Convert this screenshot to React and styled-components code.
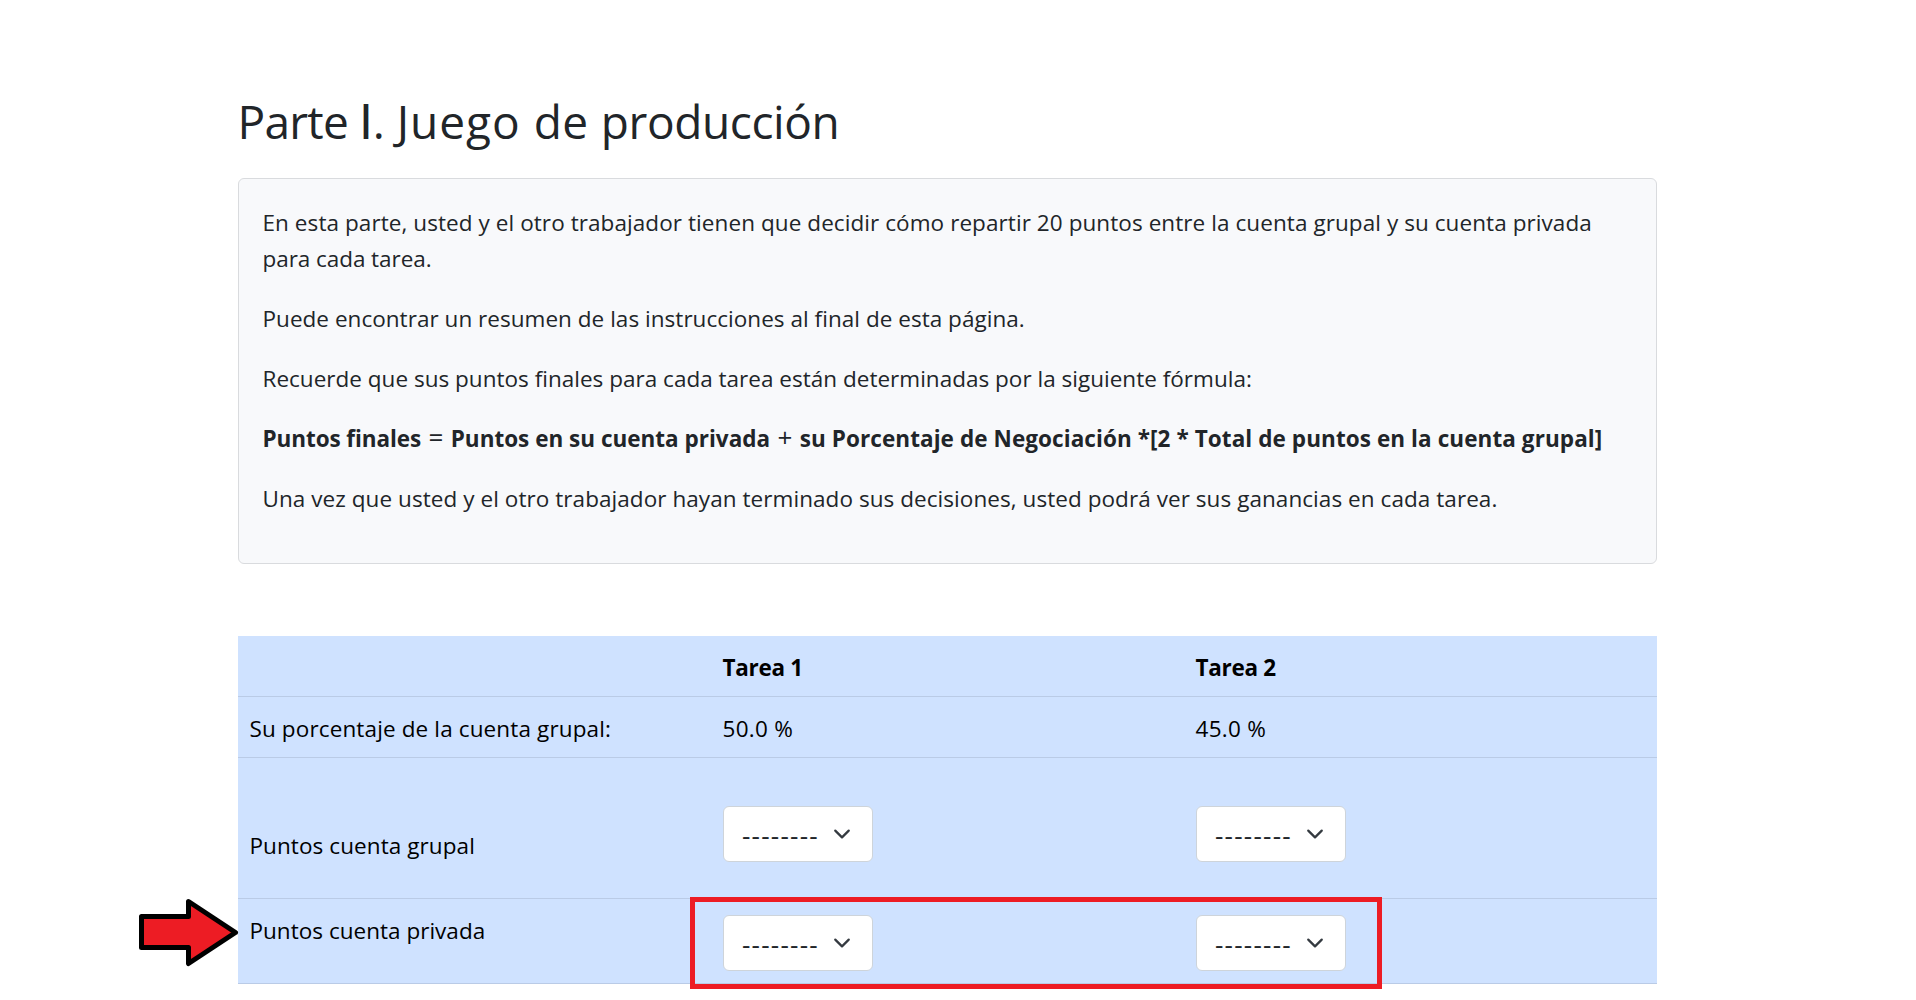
import React from "react";
import styled, { createGlobalStyle } from "styled-components";

const GlobalStyle = createGlobalStyle`
  * { box-sizing: border-box; }
  body {
    margin: 0;
    background: #fff;
    color: #212529;
    font-family: "Open Sans", "Noto Sans", sans-serif;
    font-size: 22.5px;
    line-height: 36px;
    overflow: hidden;
  }
`;

const Page = styled.main`
  position: relative;
  width: 1419px;
  height: 1000px;
  margin-left: 238px;
  padding-top: 92px;
`;

const Title = styled.h2`
  margin: 0 0 28px -0.5px;
  height: 58px;
  font-size: 46px;
  font-weight: 400;
  line-height: 58px;
  white-space: nowrap;
`;

const Word = styled.span`
  letter-spacing: ${(p) => p.$tracking || 0}px;
`;

const Numeral = styled.span`
  font-family: Lato, sans-serif;
  font-size: 48px;
  line-height: 0;
`;

const Card = styled.section`
  display: flex;
  flex-direction: column;
  gap: 24px;
  height: 386px;
  margin-bottom: 72px;
  padding: 26px 23.5px 0;
  background: #f8f9fb;
  border: 1px solid #d9dbde;
  border-radius: 6px;
`;

const Paragraph = styled.p`
  margin: 0;
  white-space: nowrap;
  letter-spacing: ${(p) => p.$tracking || 0}px;
`;

const Strong = styled.strong`
  font-weight: 700;
  letter-spacing: ${(p) => p.$tracking || 0}px;
`;

const Operator = styled.span`
  padding: 0 1.5px;
  font-size: 26px;
  line-height: 0;
`;

const Tail = styled.span`
  letter-spacing: -0.06px;
`;

const Table = styled.div`
  color: #000;
  background: #cfe2ff;
`;

const Row = styled.div`
  display: grid;
  grid-template-columns: repeat(3, 473px);
  height: ${(p) => p.$height}px;
  border-bottom: 1px solid #bacbe6;
`;

const Cell = styled.div`
  padding: ${(p) => p.$top || 14}px 11.5px 0;
  white-space: nowrap;
  font-weight: ${(p) => (p.$head ? 700 : 400)};
  letter-spacing: ${(p) => p.$tracking || 0}px;
`;

const SelectBox = styled.button`
  display: flex;
  align-items: center;
  justify-content: space-between;
  width: 150px;
  height: 56px;
  margin-left: 0.5px;
  padding: 0 18px;
  border: 1px solid #ced4da;
  border-radius: 6px;
  background: #fff;
  color: #212529;
  font-family: inherit;
  font-size: 26px;
  line-height: 36px;
`;

const Dashes = styled.span`
  padding-top: 2px;
  letter-spacing: 1.25px;
`;

const Chevron = styled.svg`
  display: block;
  width: 24px;
  height: 18px;
`;

const Highlight = styled.div`
  position: absolute;
  left: 452px;
  top: 897px;
  width: 692px;
  height: 92px;
  border: 5px solid #ed1c24;
`;

const Arrow = styled.svg`
  position: absolute;
  left: -100px;
  top: 896px;
  width: 102px;
  height: 74px;
`;

function Select() {
  return (
    <SelectBox type="button">
      <Dashes>--------</Dashes>
      <Chevron viewBox="0 0 16 16">
        <path d="m2 5 6 6 6-6" fill="none" stroke="#343a40" strokeWidth="2" strokeLinecap="round" strokeLinejoin="round" />
      </Chevron>
    </SelectBox>
  );
}

export default function App() {
  return (
    <>
      <GlobalStyle />
      <Page>
        <Title>
          <Word $tracking={-0.75}>Parte </Word>
          <Numeral>I</Numeral>
          <Word>. </Word>
          <Word $tracking={1}>Juego </Word>
          <Word $tracking={0.4}>de </Word>
          <Word $tracking={-0.4}>producción</Word>
        </Title>
        <Card>
          <Paragraph $tracking={0.075}>
            En esta parte, usted y el otro trabajador tienen que decidir cómo repartir 20 puntos entre la cuenta grupal y su cuenta privada
            <br />
            <Tail>para cada tarea.</Tail>
          </Paragraph>
          <Paragraph $tracking={0.033}>
            Puede encontrar un resumen de las instrucciones al final de esta página.
          </Paragraph>
          <Paragraph $tracking={0.015}>
            Recuerde que sus puntos finales para cada tarea están determinadas por la siguiente fórmula:
          </Paragraph>
          <Paragraph>
            <Strong $tracking={-0.08}>Puntos finales</Strong> <Operator>=</Operator>{" "}
            <Strong>Puntos en su cuenta privada</Strong> <Operator>+</Operator>{" "}
            <Strong $tracking={0.08}>su Porcentaje de Negociación *[2 * Total de puntos en la cuenta grupal]</Strong>
          </Paragraph>
          <Paragraph $tracking={0.06}>
            Una vez que usted y el otro trabajador hayan terminado sus decisiones, usted podrá ver sus ganancias en cada tarea.
          </Paragraph>
        </Card>
        <Table>
          <Row $height={61}>
            <Cell />
            <Cell $head $tracking={-0.3}>Tarea 1</Cell>
            <Cell $head $tracking={-0.3}>Tarea 2</Cell>
          </Row>
          <Row $height={61}>
            <Cell $tracking={0.13}>Su porcentaje de la cuenta grupal:</Cell>
            <Cell $tracking={0.3}>50.0 %</Cell>
            <Cell $tracking={0.3}>45.0 %</Cell>
          </Row>
          <Row $height={141}>
            <Cell $top={70} $tracking={0.08}>Puntos cuenta grupal</Cell>
            <Cell $top={48}><Select /></Cell>
            <Cell $top={48}><Select /></Cell>
          </Row>
          <Row $height={85}>
            <Cell $tracking={0.02}>Puntos cuenta privada</Cell>
            <Cell $top={16}><Select /></Cell>
            <Cell $top={16}><Select /></Cell>
          </Row>
        </Table>
        <Highlight />
        <Arrow viewBox="138 896 102 74">
          <path
            d="M141.5 916.5H188.5V901.5L235.5 932.5L188.5 963.5V947.5H141.5Z"
            fill="#ed1c24"
            stroke="#000"
            strokeWidth="5"
            strokeLinejoin="round"
          />
        </Arrow>
      </Page>
    </>
  );
}
